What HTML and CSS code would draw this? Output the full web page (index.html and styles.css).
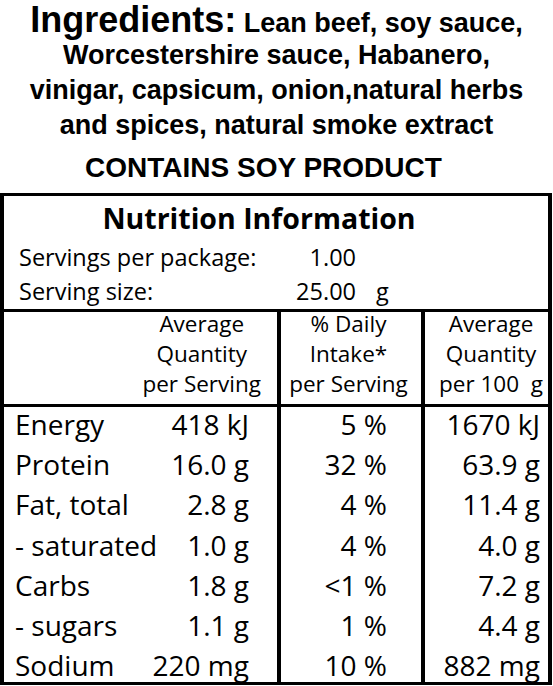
FILE: index.html
```html
<!DOCTYPE html>
<html lang="en">
<head>
    <meta charset="UTF-8">
    <meta name="viewport" content="width=device-width, initial-scale=1.0">
    <title>Beef Jerky - Label</title>
    <link rel="stylesheet" href="styles.css">
</head>
<body>
    <div class="ingredients">
        <p class="ingredients-list"><span class="lead"><span class="ingredients-title">Ingredients:</span> Lean beef, soy sauce,</span><br>Worcestershire sauce, Habanero,<br>vinigar, capsicum, onion,natural herbs<br>and spices, natural smoke extract</p>
        <p class="allergen">CONTAINS SOY PRODUCT</p>
    </div>

    <div class="panel">
        <div class="panel-head">
            <h1 class="panel-title">Nutrition Information</h1>
            <div class="serving">
                <span>Servings per package:</span>
                <span class="num">1.00</span>
                <span class="unit"></span>
            </div>
            <div class="serving">
                <span>Serving size:</span>
                <span class="num">25.00</span>
                <span class="unit">g</span>
            </div>
        </div>

        <div class="facts">
            <div class="facts-row facts-head">
                <div class="cell cell-main"><span class="stack">Average<br>Quantity<br>per Serving</span></div>
                <div class="cell cell-daily"><span class="stack">% Daily<br>Intake*<br>per Serving</span></div>
                <div class="cell cell-100"><span class="stack">Average<br>Quantity<br>per 100&nbsp; g</span></div>
            </div>
            <div class="facts-body">
                <div class="facts-row">
                    <div class="cell cell-main"><span>Energy</span><span>418 kJ</span></div>
                    <div class="cell cell-daily">5 %</div>
                    <div class="cell cell-100">1670 kJ</div>
                </div>
                <div class="facts-row">
                    <div class="cell cell-main"><span>Protein</span><span>16.0 g</span></div>
                    <div class="cell cell-daily">32 %</div>
                    <div class="cell cell-100">63.9 g</div>
                </div>
                <div class="facts-row">
                    <div class="cell cell-main"><span>Fat, total</span><span>2.8 g</span></div>
                    <div class="cell cell-daily">4 %</div>
                    <div class="cell cell-100">11.4 g</div>
                </div>
                <div class="facts-row">
                    <div class="cell cell-main"><span>- saturated</span><span>1.0 g</span></div>
                    <div class="cell cell-daily">4 %</div>
                    <div class="cell cell-100">4.0 g</div>
                </div>
                <div class="facts-row">
                    <div class="cell cell-main"><span>Carbs</span><span>1.8 g</span></div>
                    <div class="cell cell-daily">&lt;1 %</div>
                    <div class="cell cell-100">7.2 g</div>
                </div>
                <div class="facts-row">
                    <div class="cell cell-main"><span>- sugars</span><span>1.1 g</span></div>
                    <div class="cell cell-daily">1 %</div>
                    <div class="cell cell-100">4.4 g</div>
                </div>
                <div class="facts-row">
                    <div class="cell cell-main"><span>Sodium</span><span>220 mg</span></div>
                    <div class="cell cell-daily">10 %</div>
                    <div class="cell cell-100">882 mg</div>
                </div>
            </div>
        </div>
    </div>
</body>
</html>
```

FILE: styles.css
```css
body {
    margin: 0;
    width: 553px;
    font-family: "Open Sans", "Noto Sans", sans-serif;
    color: #000;
    background: #ffffff;
}

/* ingredients block above the panel */
.ingredients {
    font-family: "Liberation Sans", Arial, sans-serif;
    font-weight: 700;
    text-align: center;
}

.ingredients-list {
    margin: 0;
    padding-top: 3px;
    font-size: 27px;
    line-height: 35px;
}

/* first line sits a little lower, the big word must not push the others */
.lead {
    line-height: 0;
    vertical-align: -3px;
}

.ingredients-title {
    font-size: 36px;
}

.allergen {
    margin: 7px 0 7px;
    padding-right: 26px;
    font-size: 28px;
    line-height: 36px;
}

/* nutrition panel */
.panel {
    width: 552px;
    box-sizing: border-box;
    border: 3px solid #000;
    border-left-width: 4px;
    border-right-width: 4px;
}

.panel-head {
    padding: 2px 0 1px;
}

.panel-title {
    margin: 0 0 2px;
    padding-right: 34px;
    font-size: 28.5px;
    font-weight: 700;
    line-height: 40px;
    text-align: center;
}

.serving {
    display: grid;
    grid-template-columns: 255px 82px auto;
    padding-left: 15px;
    font-size: 23.5px;
    line-height: 34px;
}

.serving .num {
    text-align: right;
}

.serving .unit {
    padding-left: 20px;
}

.facts {
    border-top: 3px solid #000;
}

.facts-row {
    display: grid;
    grid-template-columns: 277px 144px 1fr;
    font-size: 28px;
    line-height: 40.2px;
}

.cell {
    box-sizing: border-box;
}

.cell-main {
    display: flex;
    justify-content: space-between;
    padding: 0 28px 0 11px;
    border-right: 4px solid #000;
}

.cell-daily {
    text-align: right;
    padding-right: 34px;
    border-right: 4px solid #000;
}

.cell-100 {
    text-align: right;
    padding-right: 8px;
}

.facts-head {
    border-bottom: 3px solid #000;
    font-size: 22.5px;
    line-height: 30px;
}

.facts-head .cell {
    display: block;
    padding-bottom: 5px;
}

.facts-head .cell-main {
    text-align: right;
    padding-right: 16px;
}

.facts-head .cell-daily {
    text-align: center;
    padding-right: 5px;
}

.facts-head .cell-100 {
    padding-right: 5px;
}

.stack {
    display: inline-block;
    vertical-align: top;
    margin-top: -3px;
    text-align: center;
}

/* rows run a bit into the rules above and below, as on the printed label */
.facts-body {
    margin: -3px 0;
}
```
